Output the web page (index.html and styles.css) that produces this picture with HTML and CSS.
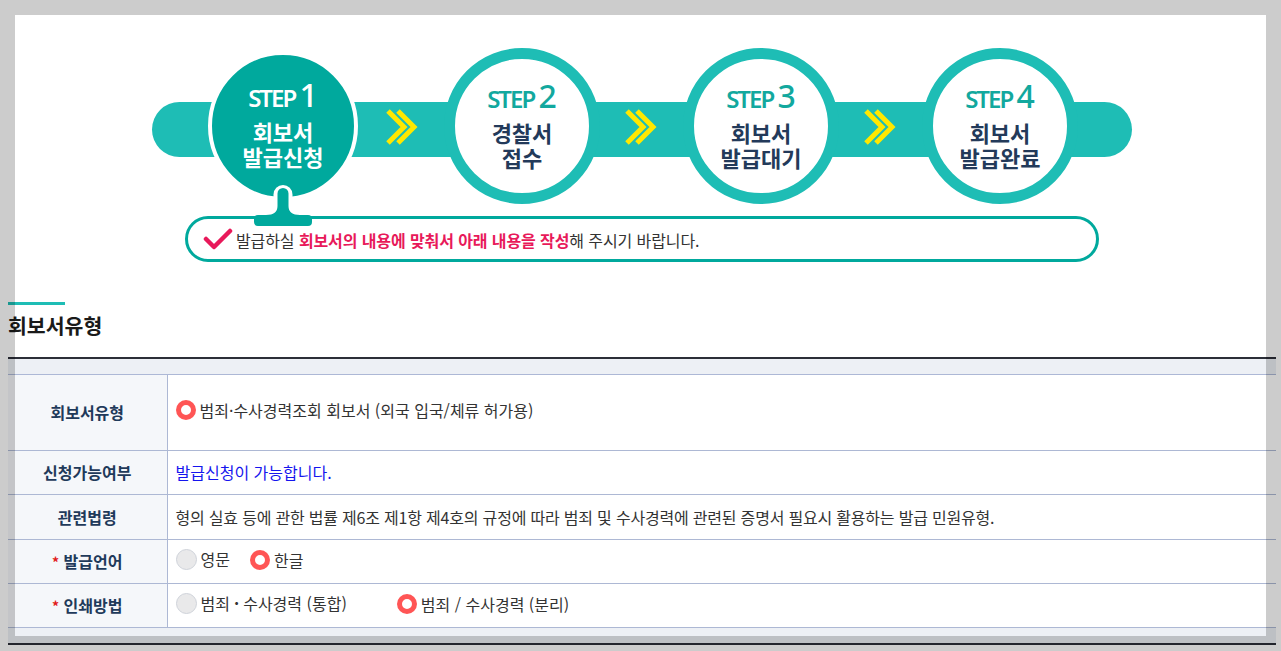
FILE: index.html
```html
<!DOCTYPE html>
<html lang="ko">
<head>
<meta charset="utf-8">
<title>회보서 발급신청</title>
<link rel="stylesheet" href="styles.css">
</head>
<body>
<div class="page">
  <div class="steps">
    <div class="step active">
      <div class="step-no"><span class="step-word">STEP</span> <span class="step-num">1</span></div>
      <div class="step-label"><div>회보서</div><div>발급신청</div></div>
    </div>
    <div class="chev"><svg width="34" height="36" viewBox="0 0 34 36"><polyline points="2,2 18,18 2,34" /><polyline points="12,2 28,18 12,34" /></svg></div>
    <div class="step">
      <div class="step-no"><span class="step-word">STEP</span> <span class="step-num">2</span></div>
      <div class="step-label"><div>경찰서</div><div>접수</div></div>
    </div>
    <div class="chev"><svg width="34" height="36" viewBox="0 0 34 36"><polyline points="2,2 18,18 2,34" /><polyline points="12,2 28,18 12,34" /></svg></div>
    <div class="step">
      <div class="step-no"><span class="step-word">STEP</span> <span class="step-num">3</span></div>
      <div class="step-label"><div>회보서</div><div>발급대기</div></div>
    </div>
    <div class="chev"><svg width="34" height="36" viewBox="0 0 34 36"><polyline points="2,2 18,18 2,34" /><polyline points="12,2 28,18 12,34" /></svg></div>
    <div class="step">
      <div class="step-no"><span class="step-word">STEP</span> <span class="step-num">4</span></div>
      <div class="step-label"><div>회보서</div><div>발급완료</div></div>
    </div>
    <svg class="knob" width="66" height="44" viewBox="0 0 66 44">
      <rect x="23.5" y="1" width="19" height="22" rx="9.5" fill="#fff"/>
      <path d="M27.5 9.5 A5.5 5.5 0 0 1 38.5 9.5 L38.5 22 Q38.5 31 50 31 L58 31 Q62 31 62 35 L62 38 Q62 42 58 42 L8 42 Q4 42 4 38 L4 35 Q4 31 8 31 L16 31 Q27.5 31 27.5 22 Z" fill="#00a99d"/>
    </svg>
  </div>

  <div class="notice">
    <svg class="check" width="30" height="24" viewBox="0 0 30 24"><polyline points="3,12 11,20 27,4" /></svg>
    <p>발급하실 <strong>회보서의 내용에 맞춰서 아래 내용을 작성</strong>해 주시기 바랍니다.</p>
  </div>

  <h2 class="sec-title">회보서유형</h2>

  <table class="form-table">
    <thead><tr><th colspan="2"></th></tr></thead>
    <tbody>
      <tr class="row-tall">
        <th>회보서유형</th>
        <td class="cell-top"><span class="opt"><span class="radio on"></span>범죄·수사경력조회 회보서 (외국 입국/체류 허가용)</span></td>
      </tr>
      <tr>
        <th>신청가능여부</th>
        <td class="ok">발급신청이 가능합니다.</td>
      </tr>
      <tr class="row-law">
        <th>관련법령</th>
        <td class="law">형의 실효 등에 관한 법률 제6조 제1항 제4호의 규정에 따라 범죄 및 수사경력에 관련된 증명서 필요시 활용하는 발급 민원유형.</td>
      </tr>
      <tr>
        <th><span class="req">*</span> 발급언어</th>
        <td><span class="opt gap20"><span class="radio"></span>영문</span><span class="opt"><span class="radio on"></span>한글</span></td>
      </tr>
      <tr>
        <th><span class="req">*</span> 인쇄방법</th>
        <td><span class="opt gap50"><span class="radio"></span>범죄 <b class="dot">·</b> 수사경력 (통합)</span><span class="opt"><span class="radio on"></span>범죄 / 수사경력 (분리)</span></td>
      </tr>
    </tbody>
    <tfoot><tr><td colspan="2"></td></tr></tfoot>
  </table>
</div>
<div class="frame"></div>
</body>
</html>
```

FILE: styles.css
```css
* { box-sizing: border-box; }
html, body { margin: 0; padding: 0; background: #fff; }
body {
  font-family: "Noto Sans CJK KR", "Noto Sans", sans-serif;
  font-size: 16px;
  color: #333;
  overflow: hidden;
}
.page { padding: 47px 5px 0 8px; }

/* steps */
.steps {
  position: relative;
  width: 980px;
  height: 158px;
  margin: 0 auto;
  display: flex;
  align-items: center;
  padding-left: 53px;
}
.steps::before {
  content: "";
  position: absolute;
  left: 0; right: 0;
  top: 55px;
  height: 55px;
  border-radius: 28px;
  background: #1ebdb5;
}
.step {
  position: relative;
  z-index: 1;
  width: 156px;
  height: 156px;
  border-radius: 50%;
  border: 11px solid #1ebdb5;
  background: #fff;
  text-align: center;
  padding-top: 20px;
}
.step.active {
  width: 150px;
  height: 150px;
  margin: 0 3px;
  border: 4px solid #fff;
  background: #00a99d;
  padding-top: 23px;
}
.step-no {
  font-family: "Noto Sans", sans-serif;
  color: #12a89e;
  font-size: 32px;
  line-height: 34px;
  height: 34px;
  word-spacing: -4px;
}
.step-word { font-size: 24px; letter-spacing: -2px; font-weight: 600; }
.step-num { font-size: 32px; font-weight: 500; letter-spacing: 0; }
.step-label {
  font-size: 22px;
  font-weight: 700;
  color: #233a5a;
  margin-top: 7px;
}
.step-label div { height: 25px; line-height: 25px; }
.step.active .step-no,
.step.active .step-label { color: #fff; }
.chev {
  position: relative;
  z-index: 1;
  width: 83px;
  display: flex;
  justify-content: center;
  padding-top: 2px;
}
.chev polyline { fill: none; stroke: #ffe800; stroke-width: 5; }
.knob { position: absolute; left: 98px; top: 137px; z-index: 2; }

/* notice */
.notice {
  width: 914px;
  height: 46px;
  margin: 11px auto 0;
  border: 3px solid #00a99d;
  border-radius: 23px;
  display: flex;
  align-items: center;
  padding-left: 15px;
  gap: 3px;
}
.check polyline { fill: none; stroke: #e8195a; stroke-width: 4.5; stroke-linecap: round; stroke-linejoin: round; }
.notice p { margin: 0; font-size: 16px; letter-spacing: -0.1px; color: #333; padding-top: 1px; }
.notice strong { color: #e8195a; font-weight: 700; }

/* section title */
.sec-title {
  margin: 40px 0 0;
  padding-top: 9px;
  font-size: 20.5px;
  line-height: 28px;
  font-weight: 700;
  color: #1a1a1a;
  position: relative;
}
.sec-title::before {
  content: "";
  position: absolute;
  left: 0; top: 0;
  width: 57px; height: 3px;
  background: #1ebdb5;
}

/* table */
.form-table {
  width: 1268px;
  margin-top: 18px;
  border-collapse: collapse;
  border-top: 2px solid #2b2e38;
  border-bottom: 2px solid #2b2e38;
}
.form-table thead th,
.form-table tfoot td {
  height: 16px;
  padding: 0;
  background: #edf0f5;
}
.form-table tfoot td { height: 17px; }
.form-table thead th { border-bottom: 1px solid #adb8d6; }
.form-table tbody th,
.form-table tbody td {
  border-bottom: 1px solid #adb8d4;
  height: 44px;
  padding: 0 8px;
}
.form-table tbody th {
  width: 159px;
  background: #f5f7fa;
  border-right: 1px solid #adb8d4;
  font-size: 16px;
  font-weight: 700;
  color: #1f3a5a;
  text-align: center;
}
.form-table tbody td { background: #fff; color: #333; font-size: 16px; }
.form-table .row-tall th,
.form-table .row-tall td { height: 76px; }
.form-table .row-law th,
.form-table .row-law td { height: 45px; }
.form-table .cell-top { vertical-align: top; padding-top: 23px; }
.form-table td.ok { color: #1515ee; }
.form-table td.law { letter-spacing: -0.2px; }
.req { color: #e21b1b; font-size: 14px; }

.opt { display: inline-flex; align-items: center; gap: 4px; }
.gap20 { margin-right: 20px; }
.gap50 { margin-right: 50px; }
.dot { font-weight: 700; }
.radio {
  display: inline-block;
  flex: none;
  width: 21px; height: 21px;
  border-radius: 50%;
  background: #e9e9ea;
  border: 1px solid #cfd3da;
}
.radio.on {
  width: 20px; height: 20px;
  background: #fff;
  border: 5px solid #ff5555;
}

/* overlay frame */
.frame {
  position: fixed;
  inset: 0;
  border: 15px solid rgba(0,0,0,0.2);
  pointer-events: none;
  z-index: 10;
}
```
